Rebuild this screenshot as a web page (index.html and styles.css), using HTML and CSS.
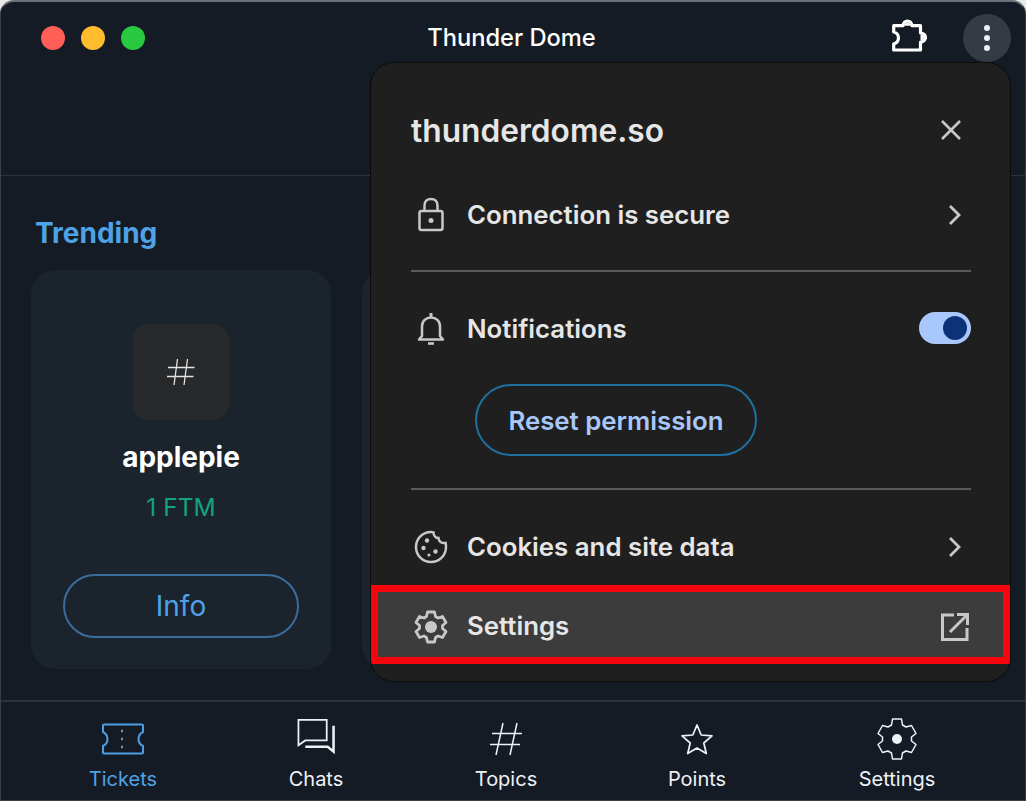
FILE: index.html
```html
<!DOCTYPE html>
<html>
<head>
    <meta charset="utf-8">
    <title>Thunder Dome</title>
    <link rel="stylesheet" href="styles.css">
</head>
<body>
    <div class="window">
        <header class="titlebar">
            <div class="lights">
                <span class="light red"></span>
                <span class="light yellow"></span>
                <span class="light green"></span>
            </div>
            <div class="title">Thunder Dome</div>
            <div class="actions">
                <svg class="puzzle" width="36" height="36" viewBox="0 0 36 36" fill="none" stroke="#fff" stroke-width="3.2" stroke-linejoin="round">
                    <path d="M2.700 6.700H12C12.500 3.500 14 2 16.500 2S20.500 3.500 21 6.700H29.500V14C32 14 34.500 16 34.500 18.500S32 23 29.500 23V31H2.700V25C5.500 24 7.500 22 7.500 19S5.500 13.500 2.700 13Z"/>
                    <path d="M13.500 6.700C14 4.500 15 3.500 16.500 3.500S19 4.500 19.500 6.700ZM29.500 15.500C32 15.500 33 17 33 18.500S32 21.500 29.500 21.500Z" fill="#fff" stroke="none"/>
                </svg>
                <div class="menu-btn">
                    <span class="dot"></span>
                    <span class="dot"></span>
                    <span class="dot"></span>
                </div>
            </div>
        </header>

        <main class="content">
            <h2 class="section-title">Trending</h2>
            <div class="cards">
                <div class="card">
                    <div class="card-icon">
                        <svg width="30" height="30" viewBox="0 0 30 30" fill="none" stroke="#e4e4e4" stroke-width="1.3">
                            <path d="M11.500 2 8 28M21.500 2 18 28M2 10.500H28.500M1 19.500H27.500"/>
                        </svg>
                    </div>
                    <div class="card-name">applepie</div>
                    <div class="card-price">1 FTM</div>
                    <div class="card-btn">Info</div>
                </div>
                <div class="card"></div>
            </div>
        </main>

        <nav class="tabbar">
            <div class="tab active">
                <svg width="44" height="36" viewBox="0 0 44 36" fill="none" stroke="#4a9fe6" stroke-width="2" stroke-linejoin="round">
                    <path d="M3 3.500H41C41.800 3.500 42 4 42 4.500V11C39 12.500 37.500 15 37.500 18S39 23.500 42 25V31.500C42 32 41.800 32.500 41 32.500H3C2.200 32.500 2 32 2 31.500V25C5 23.500 6.500 21 6.500 18S5 12.500 2 11V4.500C2 4 2.200 3.500 3 3.500Z"/>
                    <path d="M21 9.500V10.500M21 17.500V18.500M21 25.500V26.500" stroke-linecap="round" stroke="#7d98b0"/>
                </svg>
                <span>Tickets</span>
            </div>
            <div class="tab">
                <svg width="44" height="40" viewBox="0 0 44 40" fill="none" stroke="#eef1f5" stroke-width="1.8">
                    <path d="M4 2H33V23H11L4 28Z"/>
                    <path d="M40 8V34.500L34 29.500H11" stroke-width="2.600"/>
                </svg>
                <span>Chats</span>
            </div>
            <div class="tab">
                <svg width="36" height="36" viewBox="0 0 36 36" fill="none" stroke="#eef1f5" stroke-width="1.5">
                    <path d="M15 2 8 34M29 2 22 34M4 12.500H34M2 23.500H32"/>
                </svg>
                <span>Topics</span>
            </div>
            <div class="tab">
                <svg width="36" height="36" viewBox="0 0 36 36" fill="none" stroke="#eef1f5" stroke-width="1.7" stroke-linejoin="round">
                    <path d="M18 4 22.200 14 33 14.900 24.800 22 27.300 32.500 18 27 8.700 32.500 11.200 22 3 14.900 13.800 14Z"/>
                </svg>
                <span>Points</span>
            </div>
            <div class="tab tab-gear">
                <svg width="42" height="42" viewBox="0 0 42 42" fill="none" stroke="#eef1f5" stroke-width="1.500" stroke-linejoin="round">
                    <path d="M16.500 1H25.500L26.500 7 30 9 35.500 7.500 40 15.500 35.500 19V23L40 26.500 35.500 34.500 30 33 26.500 35 25.500 41H16.500L15.500 35 12 33 6.500 34.500 2 26.500 6.500 23V19L2 15.500 6.500 7.500 12 9 15.500 7Z"/>
                    <circle cx="21" cy="21" r="5" fill="#eef1f5" stroke="none"/>
                </svg>
                <span>Settings</span>
            </div>
        </nav>

        <section class="popup">
            <div class="popup-head">
                <div class="popup-host">thunderdome.so</div>
                <svg width="24" height="24" viewBox="0 0 24 24" fill="none" stroke="#c8c8c8" stroke-width="2.600">
                    <path d="M3 3 21 21M21 3 3 21"/>
                </svg>
            </div>

            <div class="row">
                <svg class="row-icon" width="28" height="36" viewBox="0 0 28 36" fill="none" stroke="#c8c8c8" stroke-width="2.500">
                    <rect x="2.500" y="14" width="23" height="19" rx="2"/>
                    <path d="M7.500 14V8.500C7.500 4.500 10 2 14 2S20.500 4.500 20.500 8.500V14"/>
                    <circle cx="14" cy="23.500" r="2.500" fill="#c8c8c8" stroke="none"/>
                </svg>
                <span class="row-label">Connection is secure</span>
                <svg width="16" height="22" viewBox="0 0 16 22" fill="none" stroke="#c8c8c8" stroke-width="2.800">
                    <path d="M3 2 12 11 3 20"/>
                </svg>
            </div>

            <div class="divider first"></div>

            <div class="row notif">
                <svg class="row-icon" width="28" height="34" viewBox="0 0 28 34" fill="none" stroke="#c8c8c8" stroke-width="2.500" stroke-linejoin="round">
                    <path d="M2 27.500H26L23 24V14.500C23 9 19 5.500 14 5.500S5 9 5 14.500V24Z"/>
                    <path d="M14 1V5" stroke-width="3"/>
                    <path d="M11 31.500H17" stroke-width="2.600"/>
                </svg>
                <span class="row-label">Notifications</span>
                <div class="toggle"><span class="knob"></span></div>
            </div>

            <div class="reset-wrap">
                <div class="reset-btn">Reset permission</div>
            </div>

            <div class="divider second"></div>

            <div class="row cookies">
                <svg class="row-icon" width="34" height="34" viewBox="0 0 34 34" fill="none" stroke="#c8c8c8" stroke-width="2.500">
                    <path d="M17 2C18 2 19 2.100 19.500 2.300 19.500 6 22 8 24.500 8 24.500 11.500 27.500 13.500 31.700 13 32 14.500 32 16 32 17 32 25.500 25.500 32 17 32S2 25.500 2 17 8.500 2 17 2Z"/>
                    <circle cx="13" cy="10.500" r="2.200" fill="#c8c8c8" stroke="none"/>
                    <circle cx="9.500" cy="18" r="2.200" fill="#c8c8c8" stroke="none"/>
                    <circle cx="21.500" cy="21.500" r="2.200" fill="#c8c8c8" stroke="none"/>
                    <circle cx="15" cy="25" r="1.600" fill="#c8c8c8" stroke="none"/>
                </svg>
                <span class="row-label">Cookies and site data</span>
                <svg width="16" height="22" viewBox="0 0 16 22" fill="none" stroke="#c8c8c8" stroke-width="2.800">
                    <path d="M3 2 12 11 3 20"/>
                </svg>
            </div>

            <div class="settings-row">
                <svg class="row-icon" width="34" height="34" viewBox="0 0 34 34" fill="none" stroke="#c8c8c8" stroke-width="2.800" stroke-linejoin="round">
                    <path d="M13.500 2H20.500L21.500 6.500 24 8 28.500 6.500 32 12.500 28.500 15.500V18.500L32 21.500 28.500 27.500 24 26 21.500 27.500 20.500 32H13.500L12.500 27.500 10 26 5.500 27.500 2 21.500 5.500 18.500V15.500L2 12.500 5.500 6.500 10 8 12.500 6.500Z"/>
                    <circle cx="17" cy="17" r="6" fill="#c8c8c8" stroke="none"/>
                </svg>
                <span class="row-label">Settings</span>
                <svg width="30" height="30" viewBox="0 0 30 30" fill="none" stroke="#c8c8c8" stroke-width="3">
                    <path d="M14 3H2.500V27.500H27V16"/>
                    <path d="M10 20 26 4"/>
                    <path d="M17 2.500H27.500V13"/>
                </svg>
            </div>
        </section>
    </div>
</body>
</html>
```

FILE: styles.css
```css
* {
    box-sizing: border-box;
}

body {
    margin: 0;
    background-color: #e9e9ea;
    font-family: Inter, "Liberation Sans", sans-serif;
}

.window {
    position: relative;
    width: 1026px;
    height: 801px;
    display: flex;
    flex-direction: column;
    overflow: hidden;
    background-color: #151b25;
    border: 1px solid #3a3f47;
    border-top: 2px solid #6a6f77;
    border-radius: 14px 14px 0 0;
}

/* title bar */
.titlebar {
    height: 174px;
    flex-shrink: 0;
    display: grid;
    grid-template-columns: 1fr auto 1fr;
    padding: 12px 14px 0 40px;
    border-bottom: 1px solid #2c323c;
}

.lights {
    display: flex;
    gap: 16px;
    margin-top: 12px;
}

.light {
    width: 24px;
    height: 24px;
    border-radius: 50%;
}

.red {
    background-color: #ff5f57;
}

.yellow {
    background-color: #febc2e;
}

.green {
    background-color: #28c840;
}

.title {
    margin: 10px 29px 0 0;
    color: #fff;
    font-size: 23.7px;
    line-height: 28px;
    font-weight: 500;
}

.actions {
    display: flex;
    justify-content: flex-end;
    align-items: flex-start;
    gap: 36px;
}

.puzzle {
    margin-top: 5px;
}

.menu-btn {
    width: 48px;
    height: 48px;
    border-radius: 50%;
    background-color: #353b45;
    display: flex;
    flex-direction: column;
    align-items: center;
    justify-content: center;
    gap: 4px;
}

.dot {
    width: 6px;
    height: 6px;
    border-radius: 50%;
    background-color: #eef1f5;
}

/* trending */
.content {
    flex: 1;
    padding: 39px 0 0 30px;
    overflow: hidden;
}

.section-title {
    margin: 0 0 19px 4px;
    color: #4ea3e6;
    font-size: 28px;
    line-height: 36px;
    font-weight: 700;
}

.cards {
    display: flex;
    gap: 31px;
}

.card {
    width: 300px;
    height: 399px;
    flex-shrink: 0;
    display: flex;
    flex-direction: column;
    align-items: center;
    padding-top: 54px;
    background-color: #1b232d;
    border-radius: 24px;
}

.card-icon {
    width: 96px;
    height: 96px;
    display: flex;
    align-items: center;
    justify-content: center;
    background-color: #27292b;
    border-radius: 16px;
}

.card-name {
    margin-top: 20px;
    color: #fff;
    font-size: 28px;
    line-height: 34px;
    font-weight: 700;
}

.card-price {
    margin-top: 17px;
    color: #13a47c;
    font-size: 24.5px;
    line-height: 32px;
}

.card-btn {
    width: 236px;
    height: 64px;
    margin-top: 51px;
    display: flex;
    align-items: center;
    justify-content: center;
    color: #4ea3e6;
    font-size: 28px;
    border: 2px solid #3a6d9e;
    border-radius: 32px;
}

/* bottom tabs */
.tabbar {
    height: 100px;
    flex-shrink: 0;
    display: grid;
    grid-template-columns: 244px 142px 238px 144px 1fr;
    padding: 16px 0 0 0;
    border-top: 2px solid #2c323c;
}

.tab {
    display: flex;
    flex-direction: column;
    align-items: center;
    justify-content: flex-end;
    height: 73px;
    color: #eef1f5;
    font-size: 20px;
    line-height: 24px;
}

.tab svg {
    margin-bottom: 10px;
}

.tab.tab-gear svg {
    margin-bottom: 7px;
}

.tab.active {
    color: #4ea3e6;
}

/* site info popup */
.popup {
    position: absolute;
    left: 369px;
    top: 60px;
    width: 641px;
    height: 620px;
    display: flex;
    flex-direction: column;
    background-color: #1f1f1f;
    border: 1px solid #0c0c0c;
    border-radius: 24px;
    overflow: hidden;
}

.popup-head {
    display: flex;
    align-items: center;
    justify-content: space-between;
    height: 40px;
    margin: 47px 47px 0 40px;
}

.popup-host {
    color: #e6e6e6;
    font-size: 31.7px;
    font-weight: 600;
}

.row {
    display: flex;
    align-items: center;
    height: 40px;
    margin: 45px 47px 0 40px;
}

.row-icon {
    flex-shrink: 0;
    margin-right: 22px;
    margin-left: 6px;
}

.row-label {
    flex: 1;
    padding-bottom: 2px;
    color: #e6e6e6;
    font-size: 25.8px;
    font-weight: 600;
}

.row.cookies .row-icon,
.settings-row .row-icon {
    margin-left: 3px;
    margin-right: 19px;
}

.divider {
    height: 2px;
    margin: 0 39px 0 40px;
    background-color: #5a5a5a;
}

.divider.first {
    margin-top: 35px;
}

.row.notif {
    margin: 37px 39px 0 40px;
}

.toggle {
    width: 52px;
    height: 32px;
    margin-bottom: 2px;
    padding: 4px;
    display: flex;
    justify-content: flex-end;
    background-color: #a8c7fa;
    border-radius: 16px;
}

.knob {
    width: 24px;
    height: 24px;
    border-radius: 50%;
    background-color: #0c3378;
}

.reset-wrap {
    margin: 35px 0 0 104px;
}

.reset-btn {
    width: 282px;
    height: 72px;
    display: flex;
    align-items: center;
    justify-content: center;
    color: #a8c7fa;
    font-size: 25.8px;
    font-weight: 600;
    border: 2px solid #1f6f9f;
    border-radius: 36px;
}

.divider.second {
    margin-top: 32px;
}

.row.cookies {
    margin: 37px 47px 0 40px;
}

.settings-row {
    display: flex;
    align-items: center;
    height: 79px;
    margin-top: 18px;
    padding: 4px 33px 0 33px;
    background-color: #3c3c3c;
    border: 7px solid #f4060c;
}
```
